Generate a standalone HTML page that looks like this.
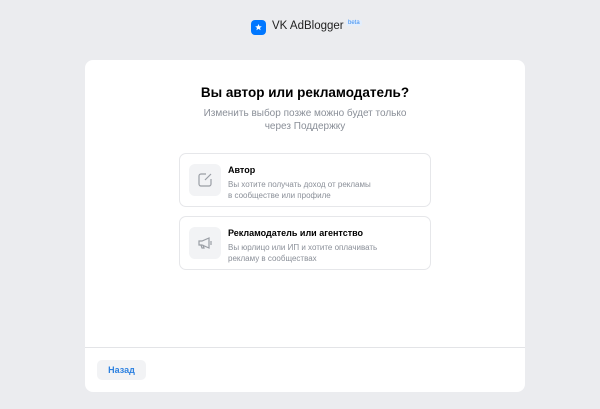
<!DOCTYPE html>
<html><head><meta charset="utf-8"><style>
body{margin:0;width:600px;height:409px;background:#ebecef;font-family:"Liberation Sans",sans-serif;position:relative;overflow:hidden}
.logo{position:absolute;left:251px;top:20px;width:15px;height:15px;border-radius:4px;background:#0077ff}
.brand{position:absolute;left:272px;top:20px;font-size:11.5px;color:#222;}
.beta{position:absolute;left:346px;top:20px;font-size:6px;color:#3a8cf0;background:#e3eefc;padding:0 2px;border-radius:2px}
.card{position:absolute;left:85px;top:60px;width:440px;height:332px;background:#fff;border-radius:8px}
h1{position:absolute;left:0;width:440px;top:25px;margin:0;text-align:center;font-size:13.5px;font-weight:bold;color:#000}
.sub{position:absolute;left:0;width:440px;top:47px;text-align:center;font-size:10px;line-height:13px;color:#8a8f98}
.opt{position:absolute;left:94px;width:250px;height:52px;border:1px solid #e6e7ea;border-radius:7px}
.ic{position:absolute;left:9px;top:10px;width:32px;height:32px;background:#f2f3f5;border-radius:6px}
.ot{position:absolute;left:48px;top:11px;font-size:9px;font-weight:bold;color:#000}
.od{position:absolute;left:48px;top:26px;font-size:8px;line-height:10.5px;color:#8a8f98}
.div{position:absolute;left:0;top:287px;width:440px;height:1px;background:#e3e4e7}
.btn{position:absolute;left:12px;top:300px;width:49px;height:20px;background:#f2f3f5;border-radius:5px;font-size:9px;color:#2d81e0;text-align:center;line-height:20px;font-weight:bold}
</style></head><body>
<div class="logo"><svg width="15" height="15" viewBox="0 0 15 15"><path d="M7.5 4l1 2.2 2.3.2-1.8 1.5.6 2.3-2.1-1.3-2.1 1.3.6-2.3-1.8-1.5 2.3-.2z" fill="#fff"/></svg></div>
<div class="brand">VK AdBlogger</div><div class="beta">beta</div>
<div class="card">
<h1>Вы автор или рекламодатель?</h1>
<div class="sub">Изменить выбор позже можно будет только<br>через Поддержку</div>
<div class="opt" style="top:93px"><div class="ic"><svg width="32" height="32" viewBox="0 0 32 32" fill="none" stroke="#9a9ea5" stroke-width="1.2"><path d="M17 10h-5a2 2 0 0 0-2 2v8a2 2 0 0 0 2 2h8a2 2 0 0 0 2-2v-5"/><path d="M16 16l6-6"/></svg></div><div class="ot">Автор</div><div class="od">Вы хотите получать доход от рекламы<br>в сообществе или профиле</div></div>
<div class="opt" style="top:156px"><div class="ic"><svg width="32" height="32" viewBox="0 0 32 32" fill="none" stroke="#9a9ea5" stroke-width="1.2"><path d="M10 14h3l7-3v10l-7-3h-3z"/><path d="M12 18l1 3h2l-1-3"/><path d="M22 14v4"/></svg></div><div class="ot">Рекламодатель или агентство</div><div class="od">Вы юрлицо или ИП и хотите оплачивать<br>рекламу в сообществах</div></div>
<div class="div"></div>
<div class="btn">Назад</div>
</div>
</body></html>
